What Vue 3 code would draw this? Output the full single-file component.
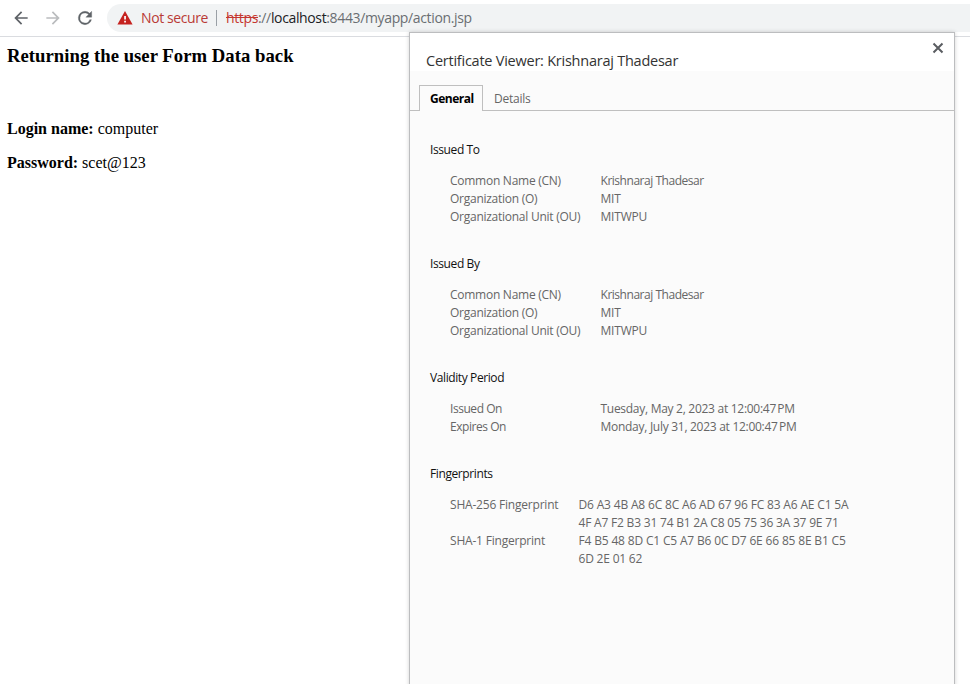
<script setup>
const sections = [
  {
    title: 'Issued To',
    kind: 'names',
    rows: [
      { label: 'Common Name (CN)', lines: ['Krishnaraj Thadesar'] },
      { label: 'Organization (O)', lines: ['MIT'] },
      { label: 'Organizational Unit (OU)', lines: ['MITWPU'] },
    ],
  },
  {
    title: 'Issued By',
    kind: 'names',
    rows: [
      { label: 'Common Name (CN)', lines: ['Krishnaraj Thadesar'] },
      { label: 'Organization (O)', lines: ['MIT'] },
      { label: 'Organizational Unit (OU)', lines: ['MITWPU'] },
    ],
  },
  {
    title: 'Validity Period',
    kind: 'dates',
    rows: [
      { label: 'Issued On', lines: ['Tuesday, May 2, 2023 at 12:00:47\u202fPM'] },
      { label: 'Expires On', lines: ['Monday, July 31, 2023 at 12:00:47\u202fPM'] },
    ],
  },
  {
    title: 'Fingerprints',
    kind: 'prints',
    rows: [
      {
        label: 'SHA-256 Fingerprint',
        lines: [
          'D6 A3 4B A8 6C 8C A6 AD 67 96 FC 83 A6 AE C1 5A',
          '4F A7 F2 B3 31 74 B1 2A C8 05 75 36 3A 37 9E 71',
        ],
      },
      {
        label: 'SHA-1 Fingerprint',
        lines: ['F4 B5 48 8D C1 C5 A7 B6 0C D7 6E 66 85 8E B1 C5', '6D 2E 01 62'],
      },
    ],
  },
]
</script>

<template>
  <div class="window">
    <header class="toolbar">
      <nav class="nav">
        <svg class="icon" viewBox="0 0 24 24"><path fill="#5f6368" d="M20 11H7.83l5.59-5.59L12 4l-8 8 8 8 1.41-1.41L7.83 13H20v-2z" /></svg>
        <svg class="icon" viewBox="0 0 24 24"><path fill="#babcbe" d="M12 4l-1.41 1.41L16.17 11H4v2h12.17l-5.58 5.59L12 20l8-8z" /></svg>
        <svg class="icon" viewBox="0 0 24 24"><path fill="#5f6368" stroke="#5f6368" stroke-width=".4" d="M17.65 6.35A7.96 7.96 0 0 0 12 4a8 8 0 1 0 7.73 10h-2.08A6 6 0 1 1 12 6c1.66 0 3.14.69 4.22 1.78L13 11h7V4l-2.35 2.35z" /></svg>
      </nav>
      <div class="omnibox">
        <svg class="warn" viewBox="0 0 16 14"><path fill="#c5221f" d="M8 0L15.6 13.5H.4z" /><path fill="#fff" d="M7.2 5h1.7v3.6H7.2zM7.2 9.8h1.7v1.7H7.2z" /></svg>
        <span class="insecure">Not secure</span>
        <span class="divider"></span>
        <span class="url"><s>https</s>://<b>localhost</b>:8443/myapp/action.jsp</span>
      </div>
    </header>

    <main class="page">
      <h3>Returning the user Form Data back</h3>
      <p><b>Login name:</b> computer</p>
      <p><b>Password:</b> scet@123</p>
    </main>

    <section class="dialog">
      <div class="head">
        <h1>Certificate Viewer: Krishnaraj Thadesar</h1>
        <svg class="close" viewBox="0 0 12 12"><path d="M1.5 1.5l9 9M10.5 1.5l-9 9" stroke="#5a5d61" stroke-width="2" /></svg>
      </div>
      <div class="tabs">
        <div class="tab active">General</div>
        <div class="tab">Details</div>
      </div>
      <div class="body">
        <div v-for="s in sections" :key="s.title" class="section" :class="s.kind">
          <h2>{{ s.title }}</h2>
          <div v-for="r in s.rows" :key="r.label" class="row">
            <span class="label">{{ r.label }}</span>
            <span class="value"><span v-for="l in r.lines" :key="l" class="line">{{ l }}</span></span>
          </div>
        </div>
      </div>
    </section>
  </div>
</template>

<style>
body { margin: 0; background: #fff; overflow: hidden; }
</style>

<style scoped>
.window { position: relative; width: 970px; height: 684px; overflow: hidden; background: #fff; font-family: "Open Sans", "Noto Sans", sans-serif; }
.toolbar { display: flex; align-items: flex-start; height: 36px; padding-top: 4px; box-sizing: border-box; box-shadow: 0 1px 0 #dadce0; }
.nav { display: flex; flex: none; gap: 12px; width: 96px; padding: 4px 0 0 11px; }
.icon { width: 20px; height: 20px; flex: none; display: block; }
.omnibox { display: flex; align-items: center; flex: 1; height: 28px; background: #f1f3f4; border-radius: 14px 0 0 14px; font-size: 14px; line-height: 28px; white-space: nowrap; }
.warn { width: 16px; height: 14px; margin-left: 10px; flex: none; }
.insecure { width: 75px; margin-left: 8px; color: #b93a36; letter-spacing: -0.4px; }
.divider { width: 1px; height: 16px; background: #9aa0a6; }
.url { margin-left: 9px; color: #6a6e72; letter-spacing: -0.36px; }
.url s { color: #c5362f; }
.url b { color: #202124; font-weight: 400; }
.page { padding: 9px 7px; font-family: "Liberation Serif", serif; font-size: 16px; line-height: 18px; color: #000; }
h3 { margin: 0 0 54px; font-size: 18.72px; line-height: 21px; letter-spacing: 0.02px; }
p { margin: 0 0 16px; }
.dialog { position: absolute; left: 409px; top: 32px; width: 544px; height: 670px; border: 1px solid #bcbdbf; background: #fbfbfb; box-shadow: 0 0 4px rgba(0, 0, 0, 0.18); }
.head { display: flex; justify-content: space-between; height: 38px; background: #fff; }
h1 { margin: 17px 0 0 16px; font-size: 14.5px; line-height: 22px; font-weight: 400; color: #333; letter-spacing: -0.24px; white-space: nowrap; }
.close { width: 12px; height: 12px; margin: 9px 10px 0 0; }
.tabs { display: flex; height: 40px; padding: 14px 0 0 9px; box-sizing: border-box; border-bottom: 1px solid #bfbfbf; font-size: 12px; line-height: 26px; color: #666; }
.tab { padding: 1px 11px 0; height: 26px; box-sizing: border-box; letter-spacing: -0.25px; }
.tab.active { width: 64px; padding: 0 10px; border: 1px solid #bfbfbf; border-bottom: 0; background: #fbfbfb; color: #000; font-weight: 700; letter-spacing: -0.5px; white-space: nowrap; }
.body { padding: 30px 20px; font-size: 12px; line-height: 18px; color: #666; white-space: nowrap; }
.section { margin-bottom: 29px; }
h2 { margin: 0 0 13px; font-size: 12px; line-height: 18px; font-weight: 400; color: #111; letter-spacing: -0.4px; }
.row { display: flex; padding-left: 20px; }
.label { width: 150.5px; letter-spacing: -0.26px; }
.value { letter-spacing: -0.2px; }
.line { display: block; }
.names .row:nth-child(2) .value { letter-spacing: -0.47px; }
.dates .label { letter-spacing: -0.45px; }
.dates .value { letter-spacing: -0.28px; }
.prints .label { width: 128.5px; letter-spacing: -0.2px; }
.prints .line:first-child { letter-spacing: -0.17px; }
</style>
